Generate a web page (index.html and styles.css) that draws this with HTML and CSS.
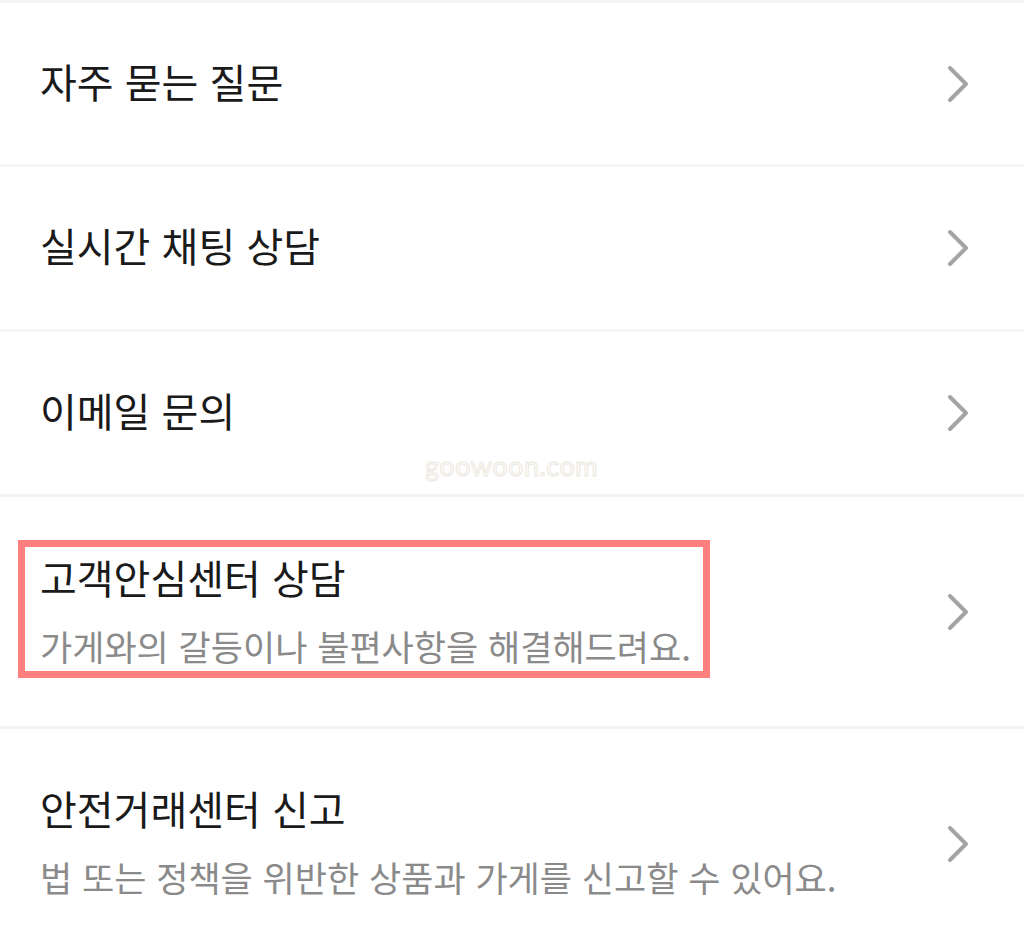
FILE: index.html
```html
<!DOCTYPE html>
<html lang="ko">
<head>
    <meta charset="UTF-8">
    <meta name="viewport" content="width=device-width, initial-scale=1.0">
    <title>고객센터</title>
    <link rel="stylesheet" href="styles.css">
</head>
<body>
    <div class="menu-list">
        <div class="menu-item">
            <div class="item-text">
                <p class="item-title">자주 묻는 질문</p>
            </div>
            <svg class="chevron" viewBox="0 0 24 40"><polyline points="4,4 20,20 4,36"/></svg>
        </div>
        <div class="menu-item">
            <div class="item-text">
                <p class="item-title">실시간 채팅 상담</p>
            </div>
            <svg class="chevron" viewBox="0 0 24 40"><polyline points="4,4 20,20 4,36"/></svg>
        </div>
        <div class="menu-item">
            <div class="item-text">
                <p class="item-title">이메일 문의</p>
            </div>
            <svg class="chevron" viewBox="0 0 24 40"><polyline points="4,4 20,20 4,36"/></svg>
        </div>
        <div class="menu-item tall">
            <div class="item-text highlight">
                <p class="item-title">고객안심센터 상담</p>
                <p class="item-desc">가게와의 갈등이나 불편사항을 해결해드려요.</p>
            </div>
            <svg class="chevron" viewBox="0 0 24 40"><polyline points="4,4 20,20 4,36"/></svg>
        </div>
        <div class="menu-item tall last">
            <div class="item-text">
                <p class="item-title">안전거래센터 신고</p>
                <p class="item-desc">법 또는 정책을 위반한 상품과 가게를 신고할 수 있어요.</p>
            </div>
            <svg class="chevron" viewBox="0 0 24 40"><polyline points="4,4 20,20 4,36"/></svg>
        </div>
        <span class="watermark">goowoon.com</span>
    </div>
</body>
</html>
```

FILE: styles.css
```css
body {
    margin: 0;
    padding: 0;
    background: #fff;
    font-family: "Noto Sans CJK KR", "Noto Sans", sans-serif;
    overflow: hidden;
}

.menu-list {
    position: relative;
    border-top: 3px solid #f4f4f4;
}

.menu-item {
    display: flex;
    align-items: center;
    justify-content: space-between;
    min-height: 165px;
    padding: 0 54px 6px 40px;
    border-bottom: 3px solid #f4f4f4;
    box-sizing: border-box;
}

.menu-item:first-child {
    min-height: 164px;
}

.menu-item.tall {
    min-height: 232px;
}

.menu-item.last {
    min-height: 230px;
    border-bottom: none;
}

.chevron {
    width: 24px;
    height: 40px;
    flex-shrink: 0;
    margin-top: 6px;
    fill: none;
    stroke: #a4a4a4;
    stroke-width: 4;
    stroke-linecap: round;
    stroke-linejoin: round;
}

.item-title {
    margin: 0;
    font-size: 40px;
    line-height: 46px;
    color: #1a1a1a;
}

.item-desc {
    margin: 25px 0 0;
    font-size: 35px;
    line-height: 42px;
    color: #8a8a8a;
}

.highlight {
    margin-left: -22px;
    padding: 7px 12px 4px 15px;
    border: 7px solid #ff7e7e;
}

.watermark {
    position: absolute;
    left: 425px;
    top: 446px;
    font-family: "Lato", "Liberation Sans", sans-serif;
    font-size: 27px;
    color: #fff;
    -webkit-text-stroke: 1px #ece7dd;
    letter-spacing: 0.5px;
}
```
